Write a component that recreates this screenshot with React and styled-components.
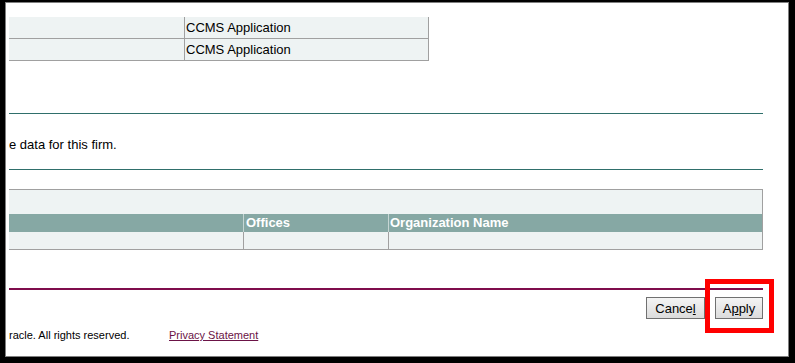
import React from "react";
import styled, { createGlobalStyle } from "styled-components";

const GlobalStyle = createGlobalStyle`
  html, body {
    margin: 0;
    padding: 0;
    background: #fff;
  }
  body {
    font-family: "Liberation Sans", Arial, sans-serif;
    color: #000;
  }
`;

const Frame = styled.div`
  position: relative;
  width: 795px;
  height: 363px;
  box-sizing: border-box;
  border-style: solid;
  border-color: #000;
  border-width: 2px 6px 6px 5px;
  background: #000;
`;

const Inner = styled.div`
  height: 100%;
  box-sizing: border-box;
  border: 1px solid #7f7f7f;
  background: #fff;
  padding-left: 3px;
  overflow: hidden;
`;

const Content = styled.div`
  width: 754px;
  display: flex;
  flex-direction: column;
`;

const SmallTable = styled.div`
  margin-top: 14px;
  width: 420px;
  display: flex;
  flex-direction: column;
`;

const Row = styled.div`
  display: flex;
  background: #eef3f3;
  border-bottom: 1px solid #a0a0a0;
`;

const Cell = styled.div`
  width: ${(p) => p.$w}px;
  box-sizing: border-box;
  height: ${(p) => p.$h || 21}px;
  line-height: ${(p) => p.$h || 21}px;
  padding-left: ${(p) => p.$pad || 1}px;
  border-right: 1px solid ${(p) => p.$line || "#a0a0a0"};
  font-size: 13px;
  white-space: nowrap;
  &:last-child {
    border-right: ${(p) => (p.$last ? "none" : `1px solid ${p.$line || "#a0a0a0"}`)};
  }
`;

const Rule = styled.div`
  margin-top: ${(p) => p.$top}px;
  height: ${(p) => p.$size || 1}px;
  background: ${(p) => p.$color};
`;

const Message = styled.div`
  margin-top: 23px;
  font-size: 13px;
  line-height: 15px;
  white-space: nowrap;
`;

const DataTable = styled.div`
  margin-top: 19px;
  border-top: 1px solid #a0a0a0;
  border-right: 1px solid #a0a0a0;
  border-bottom: 1px solid #a0a0a0;
  display: flex;
  flex-direction: column;
`;

const TableTitleBar = styled.div`
  height: 24px;
  background: #eef3f3;
`;

const HeadRow = styled.div`
  display: flex;
  background: #86a8a4;
  color: #fff;
  font-weight: bold;
`;

const BodyRow = styled.div`
  display: flex;
  background: #eef3f3;
`;

const ButtonBar = styled.div`
  margin-top: 7px;
  display: flex;
  justify-content: flex-end;
  gap: 10px;
`;

const Button = styled.button`
  height: 22px;
  width: ${(p) => p.$w}px;
  box-sizing: border-box;
  padding: 0;
  border: 1px solid #707070;
  border-radius: 0;
  background: linear-gradient(#f4f4f4, #dcdcdc);
  font-family: "Liberation Sans", Arial, sans-serif;
  font-size: 13px;
  color: #000;
  u {
    text-decoration: underline;
  }
`;

const Footer = styled.div`
  margin-top: 9px;
  display: flex;
  font-size: 11px;
  line-height: 14px;
  white-space: nowrap;
`;

const Copyright = styled.span`
  width: 160px;
`;

const FooterLink = styled.a`
  color: #6b1346;
  text-decoration: underline;
`;

const Highlight = styled.div`
  position: absolute;
  left: 700px;
  top: 277px;
  width: 69px;
  height: 54px;
  box-sizing: border-box;
  border: 5px solid #ff0000;
  pointer-events: none;
`;

export default function App() {
  return (
    <>
      <GlobalStyle />
      <Frame>
        <Inner>
          <Content>
            <SmallTable>
              <Row>
                <Cell $w={176} />
                <Cell $w={244}>CCMS Application</Cell>
              </Row>
              <Row>
                <Cell $w={176} />
                <Cell $w={244}>CCMS Application</Cell>
              </Row>
            </SmallTable>

            <Rule $top={52} $color="#2f6f6b" />
            <Message>e data for this firm.</Message>
            <Rule $top={17} $color="#2f6f6b" />

            <DataTable>
              <TableTitleBar />
              <HeadRow>
                <Cell $w={235} $h={18} $pad={2} $line="#c6d6d4" />
                <Cell $w={145} $h={18} $pad={2} $line="#c6d6d4">Offices</Cell>
                <Cell $w={373} $h={18} $pad={1} $last>Organization Name</Cell>
              </HeadRow>
              <BodyRow>
                <Cell $w={235} $h={17} />
                <Cell $w={145} $h={17} />
                <Cell $w={373} $h={17} $last />
              </BodyRow>
            </DataTable>

            <Rule $top={38} $size={2} $color="#7f0d4c" />

            <ButtonBar>
              <Button $w={59}>
                Cance<u>l</u>
              </Button>
              <Button $w={48}>
                A<u>p</u>ply
              </Button>
            </ButtonBar>

            <Footer>
              <Copyright>racle. All rights reserved.</Copyright>
              <FooterLink href="#">Privacy Statement</FooterLink>
            </Footer>
          </Content>
        </Inner>
        <Highlight />
      </Frame>
    </>
  );
}
